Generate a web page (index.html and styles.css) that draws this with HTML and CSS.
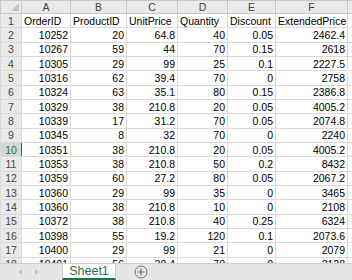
FILE: index.html
```html
<!DOCTYPE html>
<html lang="en">
  <head>
    <meta charset="UTF-8" />
    <title>Sheet1</title>
    <link rel="stylesheet" href="styles.css">
  </head>
  <body>
    <div class="sheet">
      <table class="grid">
        <colgroup>
          <col class="col-rh" />
          <col class="col-a" />
          <col class="col-b" />
          <col class="col-c" />
          <col class="col-d" />
          <col class="col-e" />
          <col class="col-f" />
          <col class="col-g" />
        </colgroup>
        <thead>
          <tr class="col-head">
            <th class="corner"><span class="corner-mark"></span></th>
            <th>A</th><th>B</th><th>C</th><th>D</th><th>E</th><th>F</th><th></th>
          </tr>
        </thead>
        <tbody id="rows">
          <tr>
            <th class="row-head">1</th>
            <td>OrderID</td><td>ProductID</td><td>UnitPrice</td><td>Quantity</td><td>Discount</td><td>ExtendedPrice</td><td></td>
          </tr>
        </tbody>
      </table>
    </div>

    <div class="tabs">
      <span class="nav nav-prev"></span>
      <span class="nav nav-next"></span>
      <div class="tab">Sheet1</div>
      <span class="add">
        <svg width="14" height="14" viewBox="0 0 14 14">
          <circle cx="7" cy="7" r="6" fill="none" stroke="#6f6f6f" stroke-width="1" />
          <path d="M7 3.5v7M3.5 7h7" stroke="#6f6f6f" stroke-width="1.2" />
        </svg>
      </span>
    </div>

    <script>
      const data = [
        [10252, 20, 64.8, 40, 0.05, 2462.4],
        [10267, 59, 44, 70, 0.15, 2618],
        [10305, 29, 99, 25, 0.1, 2227.5],
        [10316, 62, 39.4, 70, 0, 2758],
        [10324, 63, 35.1, 80, 0.15, 2386.8],
        [10329, 38, 210.8, 20, 0.05, 4005.2],
        [10339, 17, 31.2, 70, 0.05, 2074.8],
        [10345, 8, 32, 70, 0, 2240],
        [10351, 38, 210.8, 20, 0.05, 4005.2],
        [10353, 38, 210.8, 50, 0.2, 8432],
        [10359, 60, 27.2, 80, 0.05, 2067.2],
        [10360, 29, 99, 35, 0, 3465],
        [10360, 38, 210.8, 10, 0, 2108],
        [10372, 38, 210.8, 40, 0.25, 6324],
        [10398, 55, 19.2, 120, 0.1, 2073.6],
        [10400, 29, 99, 21, 0, 2079],
        [10401, 56, 30.4, 70, 0, 2128],
      ];

      const body = document.getElementById("rows");

      data.forEach((values, i) => {
        const rowNumber = i + 2;
        const tr = document.createElement("tr");
        const head = document.createElement("th");
        head.className = rowNumber === 10 ? "row-head active" : "row-head";
        head.textContent = rowNumber;
        tr.appendChild(head);

        values.forEach((value) => {
          const td = document.createElement("td");
          td.className = "num";
          td.textContent = value;
          tr.appendChild(td);
        });

        tr.appendChild(document.createElement("td"));
        body.appendChild(tr);
      });
    </script>
  </body>
</html>
```

FILE: styles.css
```css
html,
body {
  margin: 0;
  height: 100%;
  overflow: hidden;
  background: #fff;
}
body {
  display: flex;
  flex-direction: column;
  font-family: "Liberation Sans", Arial, sans-serif;
  font-size: 10.5px;
  color: #000;
}
.sheet {
  height: 263px;
  overflow: hidden;
  flex: none;
}
.grid {
  border-collapse: collapse;
  table-layout: fixed;
  width: 407px;
}
.col-rh { width: 21px; }
.col-a { width: 49px; }
.col-b { width: 56px; }
.col-c { width: 51px; }
.col-d { width: 50px; }
.col-e { width: 48px; }
.col-f { width: 72px; }
.col-g { width: 60px; }

.grid th,
.grid td {
  padding: 0 2px;
  white-space: nowrap;
  overflow: visible;
  line-height: 12px;
  border: 1px solid #dadada;
}
.grid tbody tr {
  height: 14.33px;
}
.col-head {
  height: 13px;
}
.col-head th {
  background: #e9e9e9;
  border-color: #c9c9c9;
  color: #444;
  font-weight: normal;
  text-align: center;
}
.corner {
  position: relative;
}
.corner-mark {
  position: absolute;
  right: 2px;
  bottom: 2px;
  width: 0;
  height: 0;
  border-left: 8px solid transparent;
  border-bottom: 8px solid #c4c4c4;
}
.row-head {
  background: #e9e9e9;
  border-color: #c9c9c9;
  color: #444;
  font-weight: normal;
  text-align: center;
}
.row-head.active {
  background: #d6d6d6;
  color: #217346;
  border-right: 1px solid #217346;
}
.grid td {
  text-align: left;
}
.grid td.num {
  text-align: right;
}

.tabs {
  flex: 1;
  display: flex;
  align-items: stretch;
  background: #e6e6e6;
  border-top: 1px solid #cfcfcf;
}
.nav {
  width: 0;
  height: 0;
  align-self: center;
  border-top: 3px solid transparent;
  border-bottom: 3px solid transparent;
}
.nav-prev {
  margin-left: 18px;
  border-right: 4px solid #c2c2c2;
}
.nav-next {
  margin-left: 13px;
  border-left: 4px solid #c2c2c2;
}
.tab {
  margin-left: 23px;
  width: 52px;
  background: #fff;
  color: #217346;
  font-family: "Liberation Sans", Arial, sans-serif;
  font-size: 12.5px;
  text-align: center;
  line-height: 14px;
  border-bottom: 2px solid #217346;
  border-left: 1px solid #d0d0d0;
  border-right: 1px solid #d0d0d0;
}
.add {
  margin-left: 18px;
  display: flex;
  align-items: center;
}
```
